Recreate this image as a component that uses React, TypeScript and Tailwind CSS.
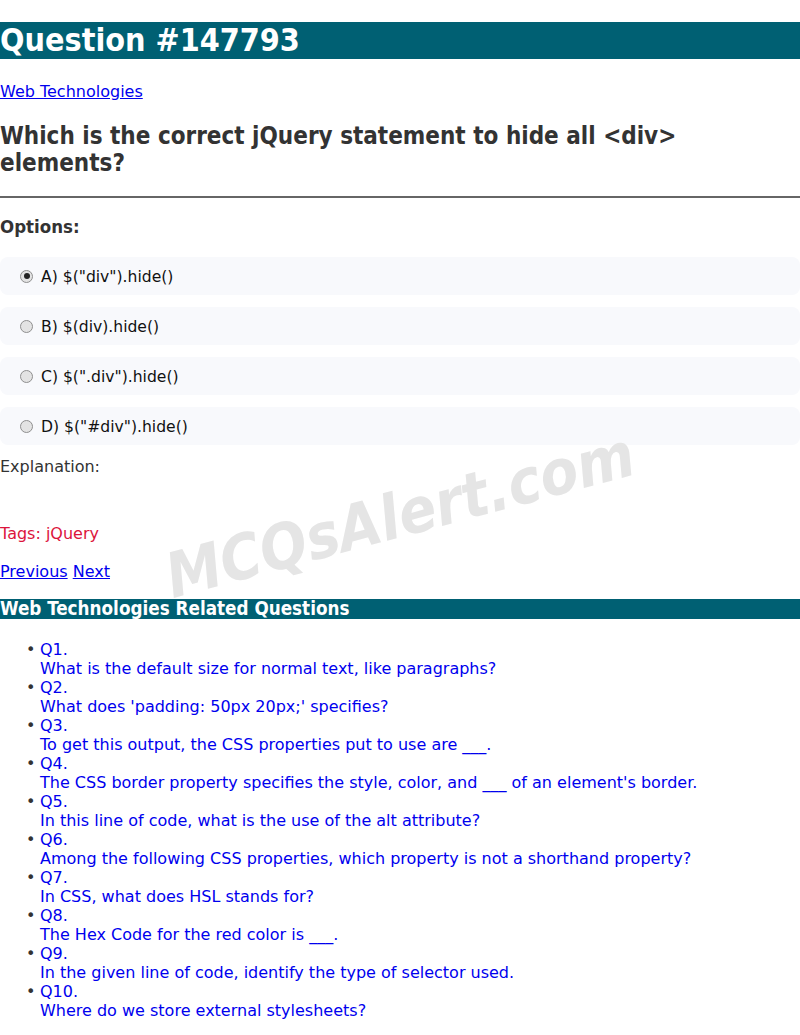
import React from "react";

const options = [
  'A) $("div").hide()',
  "B) $(div).hide()",
  'C) $(".div").hide()',
  'D) $("#div").hide()',
];

const related = [
  "What is the default size for normal text, like paragraphs?",
  "What does 'padding: 50px 20px;' specifies?",
  "To get this output, the CSS properties put to use are ___.",
  "The CSS border property specifies the style, color, and ___ of an element's border.",
  "In this line of code, what is the use of the alt attribute?",
  "Among the following CSS properties, which property is not a shorthand property?",
  "In CSS, what does HSL stands for?",
  "The Hex Code for the red color is ___.",
  "In the given line of code, identify the type of selector used.",
  "Where do we store external stylesheets?",
];

export default function App() {
  return (
    <div className="relative w-[800px] min-h-[1035px] bg-white overflow-hidden font-['DejaVu_Sans',sans-serif] text-[16px] text-[#111]">
      <h1 className="mt-[22px] mb-[23px] bg-[#006073] text-white text-[32px] leading-[37px] font-bold font-['DejaVu_Sans_Condensed','DejaVu_Sans',sans-serif]">
        Question #147793
      </h1>
      <p className="leading-[19px]">
        <a href="#" className="text-[#0000ee] underline">Web Technologies</a>
      </p>
      <h2 className="mt-[22px] mb-[19px] text-[24px] leading-[27px] font-bold text-[#333] font-['DejaVu_Sans_Condensed','DejaVu_Sans',sans-serif] pr-[100px]">
        Which is the correct jQuery statement to hide all &lt;div&gt; elements?
      </h2>
      <hr className="border-0 border-t-2 border-[#666] mt-0" />
      <h3 className="mt-[18px] mb-[19px] text-[18.5px] leading-[22px] font-bold text-[#333] font-['DejaVu_Sans_Condensed','DejaVu_Sans',sans-serif]">
        Options:
      </h3>
      <div className="flex flex-col gap-[12px]">
        {options.map((o, i) => (
          <label key={i} className="flex items-center h-[38px] pt-[3px] bg-[#f8f9fc] rounded-[8px] pl-[20px] text-[15.6px]">
            <span className="flex items-center justify-center w-[13px] h-[13px] rounded-full border border-[#8f8f8f] bg-[#e3e3e3] mr-[8px] mb-[3px] shrink-0">
              {i === 0 && <span className="block w-[6px] h-[6px] rounded-full bg-[#222]" />}
            </span>
            <span>{o}</span>
          </label>
        ))}
      </div>
      <div className="mt-[12px] leading-[19px] text-[#333]">Explanation:</div>
      <div className="mt-[48px] leading-[19px] text-[#dc143c]">Tags: jQuery</div>
      <div className="mt-[19px] leading-[19px]">
        <a href="#" className="text-[#0000ee] underline">Previous</a>{" "}
        <a href="#" className="text-[#0000ee] underline">Next</a>
      </div>
      <div className="absolute left-[400px] top-[515px] -translate-x-1/2 -translate-y-1/2 -rotate-[15deg] text-[62px] font-bold italic text-[#e5e5e5] whitespace-nowrap font-['DejaVu_Sans_Condensed','DejaVu_Sans',sans-serif] pointer-events-none">
        MCQsAlert.com
      </div>
      <h3 className="relative z-10 mt-[18px] bg-[#006073] text-white text-[18.72px] leading-[20px] font-bold font-['DejaVu_Sans_Condensed','DejaVu_Sans',sans-serif]">
        Web Technologies Related Questions
      </h3>
      <ul className="mt-[21px] leading-[19px] text-[#0000ee]">
        {related.map((q, i) => (
          <li key={i} className="flex">
            <span className="w-[40px] shrink-0 pl-[26px] text-[#333]">•</span>
            <a href="#" className="text-[#0000ee]">
              Q{i + 1}.
              <br />
              {q}
            </a>
          </li>
        ))}
      </ul>
    </div>
  );
}
